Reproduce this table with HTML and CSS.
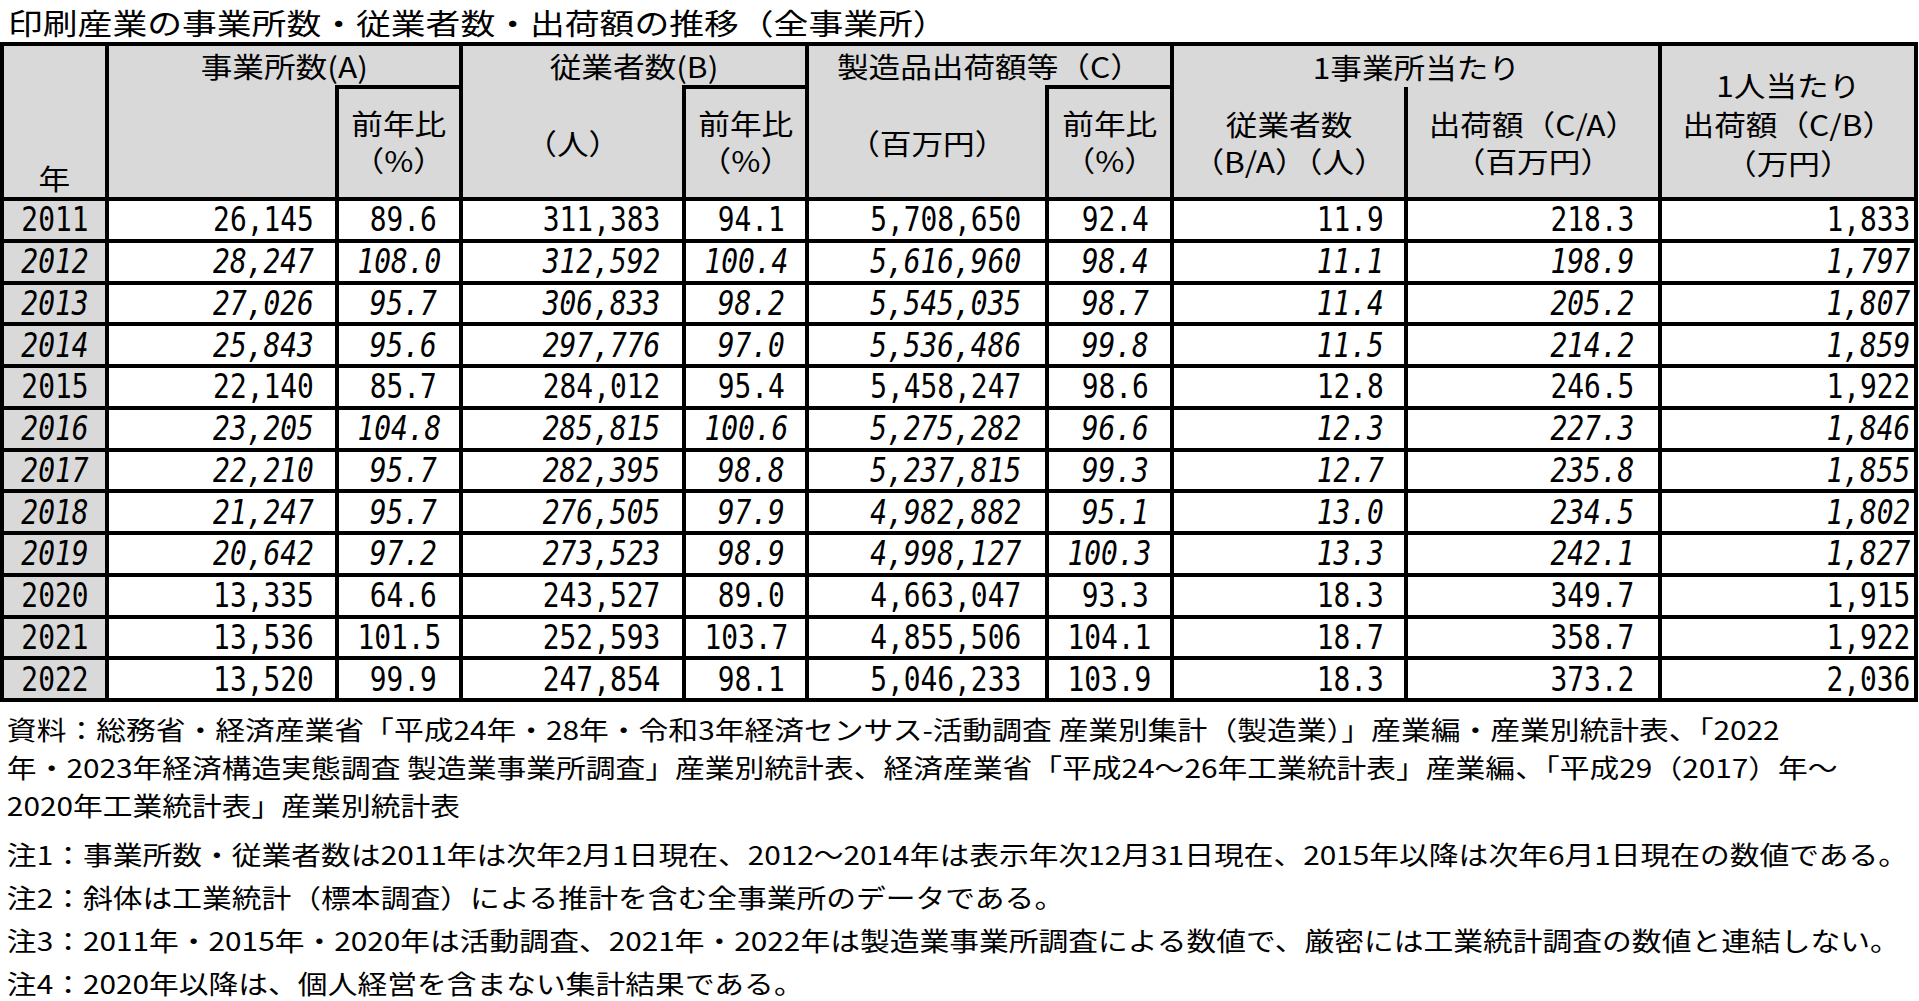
FILE: index.html
```html
<!DOCTYPE html>
<html lang="ja">
<head>
<meta charset="utf-8">
<title>印刷産業の事業所数・従業者数・出荷額の推移</title>
<link rel="stylesheet" href="styles.css">
</head>
<body>
<h1 class="title"><span class="t">印刷産業の事業所数・従業者数・出荷額の推移（全事業所）</span></h1>
<table class="stats">
<colgroup>
<col class="c-year"><col class="c-a"><col class="c-ra"><col class="c-b"><col class="c-rb"><col class="c-c"><col class="c-rc"><col class="c-ba"><col class="c-ca"><col class="c-cb">
</colgroup>
<thead>
<tr class="hr1">
<th rowspan="2" class="h-year"><span class="t">年</span></th>
<th colspan="2" class="h-group"><span class="t">事業所数(A)</span></th>
<th colspan="2" class="h-group"><span class="t">従業者数(B)</span></th>
<th colspan="2" class="h-group"><span class="t">製造品出荷額等（C）</span></th>
<th colspan="2" class="h-group"><span class="t">1事業所当たり</span></th>
<th rowspan="2" class="h-per"><span class="t">1人当たり<br>出荷額（C/B）<br>（万円）</span></th>
</tr>
<tr class="hr2">
<th class="h-unit"></th>
<th class="h-ratio"><span class="t">前年比<br>（%）</span></th>
<th class="h-unit"><span class="t">（人）</span></th>
<th class="h-ratio"><span class="t">前年比<br>（%）</span></th>
<th class="h-unit"><span class="t">（百万円）</span></th>
<th class="h-ratio"><span class="t">前年比<br>（%）</span></th>
<th class="h-sub"><span class="t">従業者数<br>（B/A）（人）</span></th>
<th class="h-sub"><span class="t">出荷額（C/A）<br>（百万円）</span></th>
</tr>
</thead>
<tbody>
<tr><td><span class="n">2011</span></td><td><span class="n">26,145</span></td><td><span class="n">89.6</span></td><td><span class="n">311,383</span></td><td><span class="n">94.1</span></td><td><span class="n">5,708,650</span></td><td><span class="n">92.4</span></td><td><span class="n">11.9</span></td><td><span class="n">218.3</span></td><td><span class="n">1,833</span></td></tr>
<tr class="est"><td><span class="n">2012</span></td><td><span class="n">28,247</span></td><td><span class="n">108.0</span></td><td><span class="n">312,592</span></td><td><span class="n">100.4</span></td><td><span class="n">5,616,960</span></td><td><span class="n">98.4</span></td><td><span class="n">11.1</span></td><td><span class="n">198.9</span></td><td><span class="n">1,797</span></td></tr>
<tr class="est"><td><span class="n">2013</span></td><td><span class="n">27,026</span></td><td><span class="n">95.7</span></td><td><span class="n">306,833</span></td><td><span class="n">98.2</span></td><td><span class="n">5,545,035</span></td><td><span class="n">98.7</span></td><td><span class="n">11.4</span></td><td><span class="n">205.2</span></td><td><span class="n">1,807</span></td></tr>
<tr class="est"><td><span class="n">2014</span></td><td><span class="n">25,843</span></td><td><span class="n">95.6</span></td><td><span class="n">297,776</span></td><td><span class="n">97.0</span></td><td><span class="n">5,536,486</span></td><td><span class="n">99.8</span></td><td><span class="n">11.5</span></td><td><span class="n">214.2</span></td><td><span class="n">1,859</span></td></tr>
<tr><td><span class="n">2015</span></td><td><span class="n">22,140</span></td><td><span class="n">85.7</span></td><td><span class="n">284,012</span></td><td><span class="n">95.4</span></td><td><span class="n">5,458,247</span></td><td><span class="n">98.6</span></td><td><span class="n">12.8</span></td><td><span class="n">246.5</span></td><td><span class="n">1,922</span></td></tr>
<tr class="est"><td><span class="n">2016</span></td><td><span class="n">23,205</span></td><td><span class="n">104.8</span></td><td><span class="n">285,815</span></td><td><span class="n">100.6</span></td><td><span class="n">5,275,282</span></td><td><span class="n">96.6</span></td><td><span class="n">12.3</span></td><td><span class="n">227.3</span></td><td><span class="n">1,846</span></td></tr>
<tr class="est"><td><span class="n">2017</span></td><td><span class="n">22,210</span></td><td><span class="n">95.7</span></td><td><span class="n">282,395</span></td><td><span class="n">98.8</span></td><td><span class="n">5,237,815</span></td><td><span class="n">99.3</span></td><td><span class="n">12.7</span></td><td><span class="n">235.8</span></td><td><span class="n">1,855</span></td></tr>
<tr class="est"><td><span class="n">2018</span></td><td><span class="n">21,247</span></td><td><span class="n">95.7</span></td><td><span class="n">276,505</span></td><td><span class="n">97.9</span></td><td><span class="n">4,982,882</span></td><td><span class="n">95.1</span></td><td><span class="n">13.0</span></td><td><span class="n">234.5</span></td><td><span class="n">1,802</span></td></tr>
<tr class="est"><td><span class="n">2019</span></td><td><span class="n">20,642</span></td><td><span class="n">97.2</span></td><td><span class="n">273,523</span></td><td><span class="n">98.9</span></td><td><span class="n">4,998,127</span></td><td><span class="n">100.3</span></td><td><span class="n">13.3</span></td><td><span class="n">242.1</span></td><td><span class="n">1,827</span></td></tr>
<tr><td><span class="n">2020</span></td><td><span class="n">13,335</span></td><td><span class="n">64.6</span></td><td><span class="n">243,527</span></td><td><span class="n">89.0</span></td><td><span class="n">4,663,047</span></td><td><span class="n">93.3</span></td><td><span class="n">18.3</span></td><td><span class="n">349.7</span></td><td><span class="n">1,915</span></td></tr>
<tr><td><span class="n">2021</span></td><td><span class="n">13,536</span></td><td><span class="n">101.5</span></td><td><span class="n">252,593</span></td><td><span class="n">103.7</span></td><td><span class="n">4,855,506</span></td><td><span class="n">104.1</span></td><td><span class="n">18.7</span></td><td><span class="n">358.7</span></td><td><span class="n">1,922</span></td></tr>
<tr><td><span class="n">2022</span></td><td><span class="n">13,520</span></td><td><span class="n">99.9</span></td><td><span class="n">247,854</span></td><td><span class="n">98.1</span></td><td><span class="n">5,046,233</span></td><td><span class="n">103.9</span></td><td><span class="n">18.3</span></td><td><span class="n">373.2</span></td><td><span class="n">2,036</span></td></tr>
</tbody>
</table>
<div class="notes">
<p class="source">資料：総務省・経済産業省「平成24年・28年・令和3年経済センサス-活動調査 産業別集計（製造業）」産業編・産業別統計表、「2022<br>年・2023年経済構造実態調査 製造業事業所調査」産業別統計表、経済産業省「平成24～26年工業統計表」産業編、「平成29（2017）年～<br>2020年工業統計表」産業別統計表</p>
<p class="note">注1：事業所数・従業者数は2011年は次年2月1日現在、2012～2014年は表示年次12月31日現在、2015年以降は次年6月1日現在の数値である。</p>
<p class="note">注2：斜体は工業統計（標本調査）による推計を含む全事業所のデータである。</p>
<p class="note">注3：2011年・2015年・2020年は活動調査、2021年・2022年は製造業事業所調査による数値で、厳密には工業統計調査の数値と連結しない。</p>
<p class="note">注4：2020年以降は、個人経営を含まない集計結果である。</p>
</div>
</body>
</html>
```

FILE: styles.css
```css
* { box-sizing: border-box; }
html, body { margin: 0; padding: 0; background: #fff; }
body {
  font-family: "Noto Sans CJK JP", "Noto Sans", sans-serif;
  color: #000;
  width: 1919px;
}

/* title */
.title {
  margin: 0;
  height: 42px;
  padding: 3px 0 0 8px;
  font-size: 29px;
  font-weight: 400;
  line-height: 38px;
  white-space: nowrap;
}
.title .t {
  display: inline-block;
  transform: scaleX(1.2);
  transform-origin: 0 50%;
}

/* table */
.stats {
  border-collapse: collapse;
  table-layout: fixed;
  width: 1918px;
  margin: 0;
}
.c-year { width: 105px; }
.c-a { width: 230px; }
.c-ra { width: 124px; }
.c-b { width: 223px; }
.c-rb { width: 123px; }
.c-c { width: 240px; }
.c-rc { width: 125px; }
.c-ba { width: 234px; }
.c-ca { width: 254px; }
.c-cb { width: 256px; }

.stats th, .stats td {
  border: 4px solid #000;
  padding: 0;
}
.stats th {
  background: #d9d9d9;
  font-weight: 400;
  font-size: 28.5px;
  line-height: 37px;
  text-align: center;
  vertical-align: middle;
  white-space: nowrap;
}
.stats th .t {
  display: inline-block;
  transform: scaleX(1.11);
  transform-origin: 50% 50%;
}
.hr1 { height: 43px; }
.hr2 { height: 112px; }
.stats th.h-year { vertical-align: bottom; padding-bottom: 1px; }
.hr1 .h-group { border-bottom: none; }
.hr2 .h-unit, .hr2 .h-sub { border-top: none; }
.hr2 .h-ratio { border-top: 4px solid #000; }
.stats th.h-ratio { padding-bottom: 4px; }
.stats th.h-per { padding-top: 4px; line-height: 39px; }

/* data */
.stats tbody tr { height: 41.75px; }
.stats td {
  font-family: "DejaVu Sans Mono", "Liberation Mono", monospace;
  font-size: 34px;
  line-height: 37px;
  text-align: right;
  vertical-align: middle;
  white-space: nowrap;
}
.stats td .n {
  display: inline-block;
  transform: scaleX(0.82);
  transform-origin: 100% 50%;
}
.stats td:nth-child(1) { background: #d9d9d9; text-align: center; }
.stats td:nth-child(1) .n { transform-origin: 50% 50%; }
.stats td:nth-child(2) { padding-right: 21px; }
.stats td:nth-child(3) { padding-right: 22px; }
.stats td:nth-child(4) { padding-right: 22px; }
.stats td:nth-child(5) { padding-right: 20px; }
.stats td:nth-child(6) { padding-right: 24px; }
.stats td:nth-child(7) { padding-right: 21px; }
.stats td:nth-child(8) { padding-right: 20px; }
.stats td:nth-child(9) { padding-right: 24px; }
.stats td:nth-child(10) { padding-right: 4px; }
.stats tr.est td { font-style: italic; }

/* notes */
.notes {
  width: 1672px;
  padding-left: 6px;
  font-size: 26px;
  white-space: nowrap;
  transform: scaleX(1.145);
  transform-origin: 0 0;
}
.notes p { margin: 0; }
.notes .source { margin-top: 8px; line-height: 38px; }
.notes .note { line-height: 43px; }
.notes .source + .note { margin-top: 8px; }
```
